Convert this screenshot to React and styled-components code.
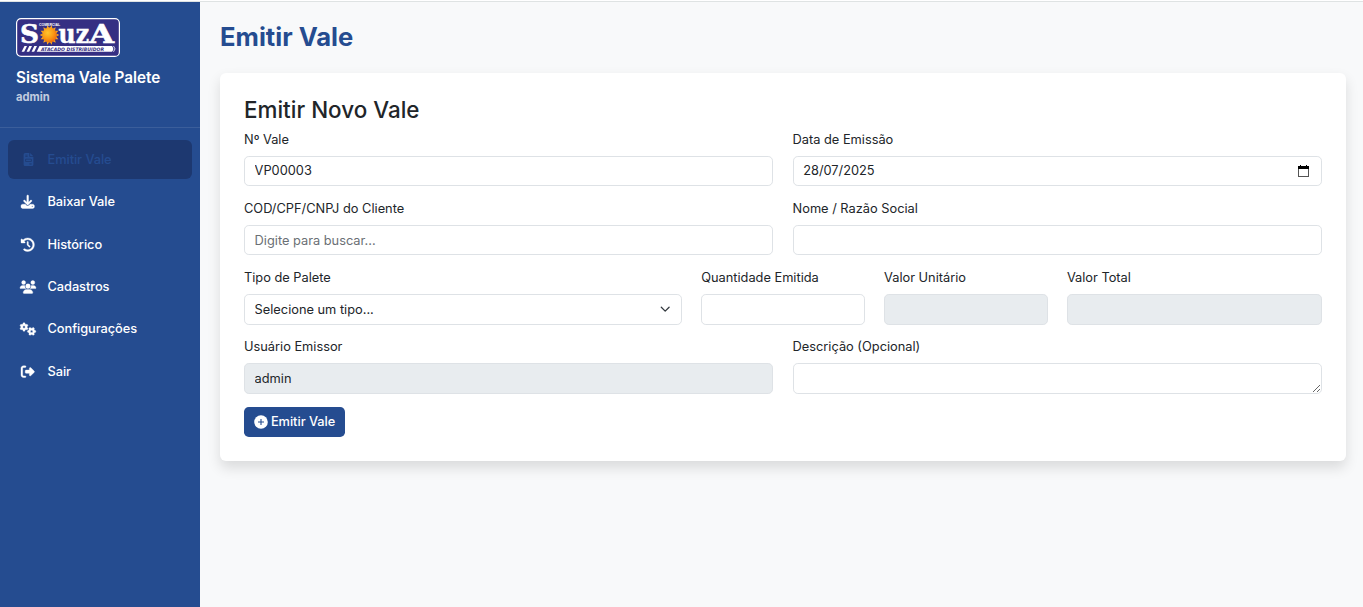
import React from "react";
import styled, { createGlobalStyle, css } from "styled-components";
import {
  FaFileInvoice,
  FaDownload,
  FaClockRotateLeft,
  FaUsers,
  FaGears,
  FaRightFromBracket,
} from "react-icons/fa6";

const Global = createGlobalStyle`
  *, *::before, *::after { box-sizing: border-box; }
  html, body { margin: 0; height: 100%; }
  body {
    background: #f8f9fa;
    color: #212529;
    font-family: Inter, "Liberation Sans", sans-serif;
    font-size: 12.8px;
    line-height: 1.5;
    overflow: hidden;
  }
`;

const Page = styled.div`
  display: flex;
  height: 100vh;
  border-top: 1px solid #fff;
`;

const Frame = styled.div`
  display: flex;
  flex: 1;
  border-top: 1px solid #dfe3e3;
`;

const Sidebar = styled.aside`
  width: 200px;
  flex: none;
  background: #254c90;
  color: #fff;
`;

const Brand = styled.div`
  height: 126px;
  padding: 16px 16px 0;
  border-bottom: 1px solid rgba(255, 255, 255, 0.1);
`;

const BrandName = styled.div`
  margin-top: 8.8px;
  font-size: 15.3px;
  font-weight: 600;
  line-height: 24px;
  letter-spacing: -0.03px;
  white-space: nowrap;
`;

const UserName = styled.div`
  margin-top: -0.8px;
  font-size: 11.2px;
  font-weight: 700;
  line-height: 16px;
  color: rgba(255, 255, 255, 0.72);
`;

const Menu = styled.nav`
  display: flex;
  flex-direction: column;
  gap: 3.6px;
  padding: 12.1px 8px;
`;

const MenuItem = styled.a`
  display: flex;
  align-items: center;
  gap: 9.4px;
  height: 38.8px;
  padding: 0 10.1px;
  border-radius: 6px;
  font-weight: 500;
  letter-spacing: -0.05px;
  color: #fff;
  ${(p) =>
    p.$active &&
    css`
      background: #1d3870;
      color: #254c90;
    `}
`;

const MenuIcon = styled.span`
  display: flex;
  justify-content: center;
  width: 20px;
  font-size: ${(p) => p.$size}px;
  & > svg {
    flex: none;
    overflow: visible;
    stroke: currentColor;
    stroke-width: ${(p) => (p.$thin ? 0 : 14)}px;
  }
`;

const Main = styled.main`
  flex: 1;
  padding: 15px 17px 0 20px;
`;

const PageTitle = styled.h1`
  margin: 0 0 17px;
  font-size: 25.6px;
  font-weight: 700;
  line-height: 39px;
  color: #254c90;
`;

const Card = styled.section`
  height: 388px;
  padding: 24px;
  background: #fff;
  border-radius: 6px;
  box-shadow: 0 6.4px 12.8px rgba(0, 0, 0, 0.12);
`;

const CardTitle = styled.h2`
  margin: 0 0 6.92px;
  font-size: 22.4px;
  font-weight: 450;
  line-height: 26px;
  letter-spacing: 0.03px;
`;

const Form = styled.form`
  display: grid;
  grid-template-columns: repeat(12, minmax(0, 1fr));
  column-gap: 19.2px;
  row-gap: 12.9px;
`;

const Field = styled.div`
  grid-column: span ${(p) => p.$span};
  display: flex;
  flex-direction: column;
`;

const Label = styled.label`
  margin-bottom: 6.4px;
  line-height: 19.2px;
`;

const control = css`
  display: block;
  width: 100%;
  height: 30.69px;
  margin: 0;
  padding: 4.6px 9.6px;
  border: 1px solid #dee2e6;
  border-radius: 4.8px;
  background: #fff;
  color: #212529;
  font: inherit;
  line-height: 19.2px;
  outline: none;
`;

const Input = styled.input`
  ${control}
  &::placeholder { color: #6b7075; opacity: 1; }
  &:read-only { background: ${(p) => (p.$muted ? "#e8ecef" : "#fff")}; }
`;

const DateBox = styled.div`
  ${control}
  display: flex;
  align-items: center;
  justify-content: space-between;
  padding-right: 12px;
`;

const Select = styled.select`
  ${control}
  appearance: none;
  padding-right: 28px;
`;

const SelectBox = styled.div`
  display: grid;
  align-items: center;
  & > * { grid-area: 1 / 1; }
  & > svg { justify-self: end; margin-right: 11.4px; pointer-events: none; }
`;

const TextArea = styled.textarea`
  ${control}
  resize: vertical;
`;

const Submit = styled.button`
  display: inline-flex;
  align-items: center;
  gap: 2.9px;
  height: 30.2px;
  margin-top: 13.1px;
  padding: 0 10.2px 0 10px;
  border: 0;
  border-radius: 4.8px;
  background: #254c90;
  color: #fff;
  font: inherit;
  font-weight: 500;
  letter-spacing: -0.03px;
`;

const LogoSvg = styled.svg`
  display: block;
`;

const rays = Array.from({ length: 14 }, (_, i) => {
  const a = (i * Math.PI * 2) / 14;
  const pt = (r, t) => `${33.5 + r * Math.cos(t)},${17 + r * Math.sin(t)}`;
  return `${pt(7, a - 0.2)} ${pt(9.9, a)} ${pt(7, a + 0.2)}`;
});

const Logo = () => (
  <LogoSvg width="104" height="39" viewBox="0 0 104 39">
    <defs>
      <radialGradient id="sun" cx="0.38" cy="0.35" r="0.7">
        <stop offset="0" stopColor="#ffc52e" />
        <stop offset="0.55" stopColor="#fb9a14" />
        <stop offset="1" stopColor="#ee6a0c" />
      </radialGradient>
    </defs>
    <rect x="0.6" y="0.6" width="102.8" height="37.8" rx="4.5" fill="#352f83" stroke="#fff" strokeWidth="1.2" />
    <g fill="#fff" stroke="#fff" strokeWidth="0.6" fontFamily="'DejaVu Serif', serif" fontWeight="700">
      <text x="4" y="25" fontSize="26.5" textLength="19" lengthAdjust="spacingAndGlyphs">S</text>
      <text x="42.6" y="25" fontSize="26.5" textLength="30.4" lengthAdjust="spacingAndGlyphs">uz</text>
      <text x="73.2" y="25" fontSize="26.5" textLength="24.8" lengthAdjust="spacingAndGlyphs">A</text>
    </g>
    <text x="23" y="8" fontSize="3.4" fontWeight="700" fill="#fff" fontFamily="'Liberation Sans', sans-serif" textLength="21" lengthAdjust="spacingAndGlyphs">COMERCIAL</text>
    {rays.map((r) => <polygon key={r} points={r} fill="#f6a623" />)}
    <circle cx="33.5" cy="17" r="7.4" fill="url(#sun)" />
    <g fill="#fff">
      <path d="M8.5 28h2.5l-2.8 5.8H5.6zM13.3 28h2.7l-2.8 5.8h-2.6zM18.3 28h2.7l-2.8 5.8h-2.6z" />
      <path d="M23.5 28H96q2.6 2.9 0 5.8H20.7z" />
      <path d="M97.5 28q3 2.9 0 5.8" fill="none" stroke="#fff" strokeWidth="0.8" />
    </g>
    <text x="25" y="32.6" fontSize="4.7" fontWeight="700" fontStyle="italic" fill="#352f83" fontFamily="'DejaVu Sans', sans-serif" textLength="63" lengthAdjust="spacingAndGlyphs">ATACADO DISTRIBUIDOR</text>
  </LogoSvg>
);

const CalendarIcon = () => (
  <svg width="11" height="12" viewBox="0 0 11 12" shapeRendering="crispEdges">
    <path d="M2 0h1v1h5V0h1v1h2v3H0V1h2z" fill="#000" />
    <path d="M0.5 3.5v8h10v-8" fill="none" stroke="#555" />
  </svg>
);

const Chevron = () => (
  <svg width="10.4" height="10.4" viewBox="0 0 16 16">
    <path d="m2 5 6 6 6-6" fill="none" stroke="#343a40" strokeWidth="2" strokeLinecap="round" strokeLinejoin="round" />
  </svg>
);

const PlusIcon = () => (
  <svg width="14" height="14" viewBox="0 0 14 14">
    <circle cx="7" cy="7" r="6.8" fill="#fff" />
    <path d="M7 4v6M4 7h6" fill="none" stroke="#254c90" strokeWidth="1.1" />
  </svg>
);

const menu = [
  { label: "Emitir Vale", Icon: FaFileInvoice, size: 13, active: true },
  { label: "Baixar Vale", Icon: FaDownload, size: 13.4 },
  { label: "Histórico", Icon: FaClockRotateLeft, size: 13.4 },
  { label: "Cadastros", Icon: FaUsers, size: 16 },
  { label: "Configurações", Icon: FaGears, size: 16 },
  { label: "Sair", Icon: FaRightFromBracket, size: 13.4 },
];

export default function App() {
  return (
    <Page>
      <Global />
      <Frame>
        <Sidebar>
          <Brand>
            <Logo />
            <BrandName>Sistema Vale Palete</BrandName>
            <UserName>admin</UserName>
          </Brand>
          <Menu>
            {menu.map(({ label, Icon, size, active }) => (
              <MenuItem key={label} $active={active}>
                <MenuIcon $size={size} $thin={active}><Icon /></MenuIcon>
                {label}
              </MenuItem>
            ))}
          </Menu>
        </Sidebar>
        <Main>
          <PageTitle>Emitir Vale</PageTitle>
          <Card>
            <CardTitle>Emitir Novo Vale</CardTitle>
            <Form>
              <Field $span={6}>
                <Label>Nº Vale</Label>
                <Input readOnly value="VP00003" />
              </Field>
              <Field $span={6}>
                <Label>Data de Emissão</Label>
                <DateBox>
                  <span>28/07/2025</span>
                  <CalendarIcon />
                </DateBox>
              </Field>
              <Field $span={6}>
                <Label>COD/CPF/CNPJ do Cliente</Label>
                <Input placeholder="Digite para buscar..." />
              </Field>
              <Field $span={6}>
                <Label>Nome / Razão Social</Label>
                <Input />
              </Field>
              <Field $span={5}>
                <Label>Tipo de Palete</Label>
                <SelectBox>
                  <Select>
                    <option>Selecione um tipo...</option>
                  </Select>
                  <Chevron />
                </SelectBox>
              </Field>
              <Field $span={2}>
                <Label>Quantidade Emitida</Label>
                <Input />
              </Field>
              <Field $span={2}>
                <Label>Valor Unitário</Label>
                <Input readOnly $muted />
              </Field>
              <Field $span={3}>
                <Label>Valor Total</Label>
                <Input readOnly $muted />
              </Field>
              <Field $span={6}>
                <Label>Usuário Emissor</Label>
                <Input readOnly $muted value="admin" />
              </Field>
              <Field $span={6}>
                <Label>Descrição (Opcional)</Label>
                <TextArea rows={1} />
              </Field>
            </Form>
            <Submit type="button">
              <PlusIcon />
              Emitir Vale
            </Submit>
          </Card>
        </Main>
      </Frame>
    </Page>
  );
}
